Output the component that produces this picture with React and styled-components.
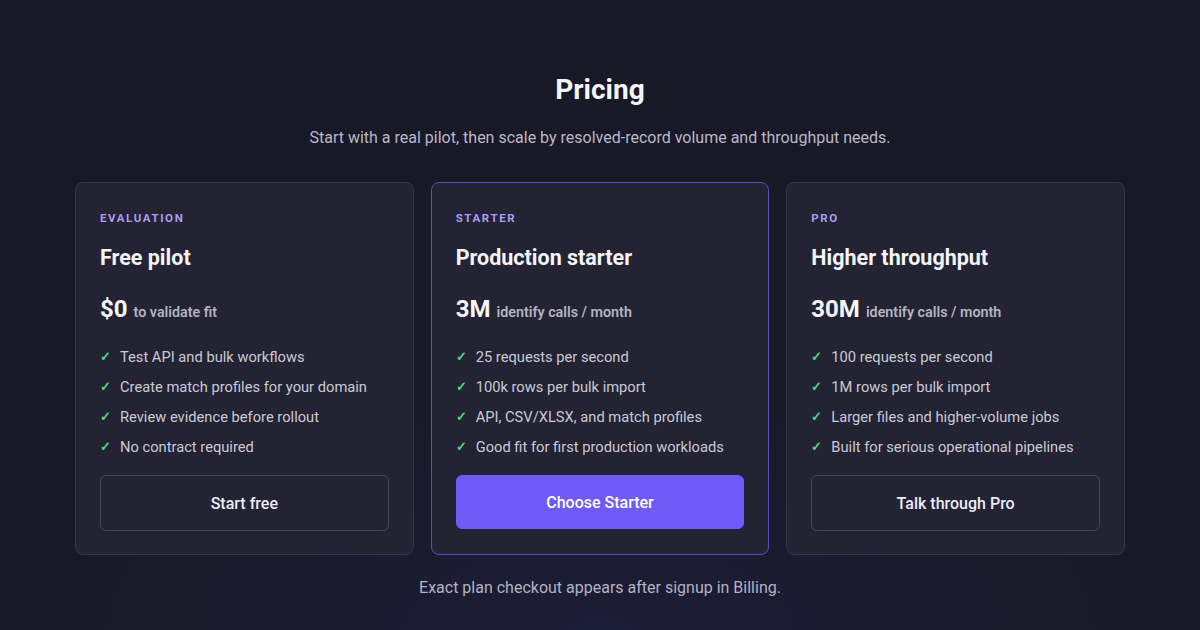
import React from 'react';
import styled, { createGlobalStyle, css } from 'styled-components';

const GlobalStyle = createGlobalStyle`
	html, body {
		margin: 0;
		height: 100%;
	}

	body {
		font-family: Roboto, "Liberation Sans", Arial, sans-serif;
		background: radial-gradient(ellipse 70% 60% at 50% 100%, #1c1d36 0%, #181826 70%);
		background-color: #181826;
		color: #f2f2f8;
		-webkit-font-smoothing: antialiased;
	}
`;

const Page = styled.main`
	display: flex;
	flex-direction: column;
	align-items: center;
	padding-top: 73px;
	min-height: 630px;
	box-sizing: border-box;
`;

const Heading = styled.h1`
	margin: 0;
	font-size: 28px;
	line-height: 34px;
	font-weight: 700;
	color: #f4f4fa;
`;

const Subtitle = styled.p`
	margin: 19px 0 0;
	font-size: 16px;
	line-height: 24px;
	color: #b9b9c8;
`;

const Grid = styled.section`
	display: grid;
	grid-template-columns: repeat(3, 1fr);
	width: 1050px;
	gap: 17px;
	margin-top: 32px;
`;

const Card = styled.article`
	display: flex;
	flex-direction: column;
	background: #232333;
	border: 1px solid ${(p) => (p.$featured ? '#5a4cc4' : '#363647')};
	border-radius: 8px;
	padding: 26px 24px 24px;
	box-sizing: border-box;
	height: 373px;
`;

const Tier = styled.div`
	font-size: 11.5px;
	line-height: 16px;
	font-weight: 700;
	letter-spacing: 1.6px;
	text-transform: uppercase;
	color: #aa9df2;
	margin-top: 1px;
`;

const Title = styled.h2`
	margin: 18px 0 0;
	font-size: 21.5px;
	line-height: 28px;
	font-weight: 700;
	color: #f4f4fa;
`;

const Price = styled.div`
	display: flex;
	align-items: baseline;
	gap: 6px;
	margin-top: 22px;
	line-height: 30px;
`;

const Amount = styled.span`
	font-size: 24px;
	font-weight: 700;
	color: #f6f6fb;
`;

const Unit = styled.span`
	font-size: 14.3px;
	font-weight: 600;
	color: #b3b3c2;
`;

const Features = styled.ul`
	list-style: none;
	margin: 20px 0 0;
	padding: 0;
	display: flex;
	flex-direction: column;
	gap: 10px;
`;

const Feature = styled.li`
	display: flex;
	align-items: center;
	gap: 9px;
	font-size: 14.7px;
	line-height: 20px;
	color: #cacad6;
`;

const Check = styled.span`
	color: #4fd384;
	font-size: 13px;
	font-weight: 700;
	width: 11px;
`;

const Button = styled.button`
	flex-shrink: 0;
	margin-top: 18px;
	height: 56px;
	width: 100%;
	border-radius: 6px;
	font-family: inherit;
	font-size: 16px;
	font-weight: 500;
	cursor: pointer;
	${(p) =>
		p.$primary
			? css`
					background: #7059f6;
					border: 1px solid #7059f6;
					color: #ffffff;
					height: 54px;
			  `
			: css`
					background: transparent;
					border: 1px solid #45455a;
					color: #ececf4;
			  `}
`;

const Footnote = styled.p`
	margin: 21px 0 0;
	font-size: 16px;
	line-height: 24px;
	color: #b3b3c4;
`;

const plans = [
	{
		tier: 'Evaluation',
		title: 'Free pilot',
		amount: '$0',
		unit: 'to validate fit',
		features: [
			'Test API and bulk workflows',
			'Create match profiles for your domain',
			'Review evidence before rollout',
			'No contract required',
		],
		cta: 'Start free',
	},
	{
		tier: 'Starter',
		title: 'Production starter',
		amount: '3M',
		unit: 'identify calls / month',
		features: [
			'25 requests per second',
			'100k rows per bulk import',
			'API, CSV/XLSX, and match profiles',
			'Good fit for first production workloads',
		],
		cta: 'Choose Starter',
		featured: true,
	},
	{
		tier: 'Pro',
		title: 'Higher throughput',
		amount: '30M',
		unit: 'identify calls / month',
		features: [
			'100 requests per second',
			'1M rows per bulk import',
			'Larger files and higher-volume jobs',
			'Built for serious operational pipelines',
		],
		cta: 'Talk through Pro',
	},
];

function App() {
	return (
		<>
			<GlobalStyle />
			<Page>
				<Heading>Pricing</Heading>
				<Subtitle>
					Start with a real pilot, then scale by resolved-record volume and throughput needs.
				</Subtitle>
				<Grid>
					{plans.map((plan) => (
						<Card key={plan.tier} $featured={plan.featured}>
							<Tier>{plan.tier}</Tier>
							<Title>{plan.title}</Title>
							<Price>
								<Amount>{plan.amount}</Amount>
								<Unit>{plan.unit}</Unit>
							</Price>
							<Features>
								{plan.features.map((f) => (
									<Feature key={f}>
										<Check>✓</Check>
										{f}
									</Feature>
								))}
							</Features>
							<Button $primary={plan.featured}>{plan.cta}</Button>
						</Card>
					))}
				</Grid>
				<Footnote>Exact plan checkout appears after signup in Billing.</Footnote>
			</Page>
		</>
	);
}

export default App;
